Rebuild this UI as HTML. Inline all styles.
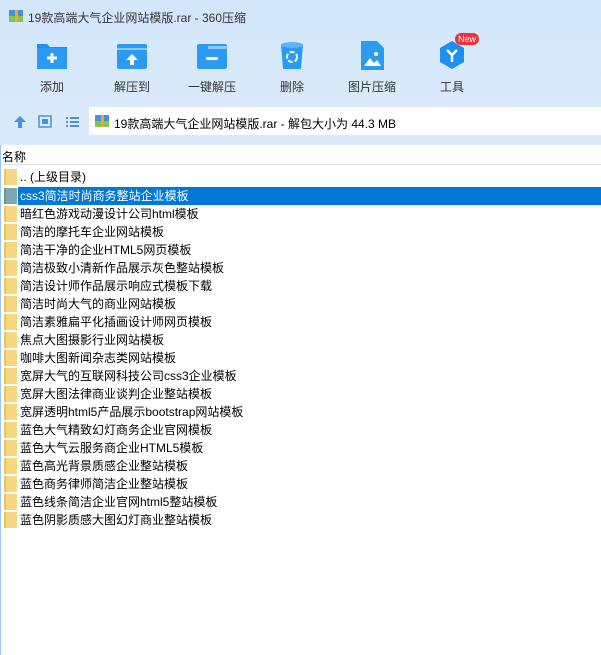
<!DOCTYPE html>
<html><head><meta charset="utf-8"><style>
*{margin:0;padding:0;box-sizing:border-box}
body{width:601px;height:655px;overflow:hidden;font-family:"Liberation Sans","Noto Sans CJK SC",sans-serif;background:#fff;position:relative;font-size:12px;color:#000}
.top{position:absolute;left:0;top:0;width:601px;height:145px;background:linear-gradient(#d3e6fa,#dcebfb)}
.title{position:absolute;left:28px;top:9px;font-size:12px;color:#333}
.tb{position:absolute;top:40px;width:60px;text-align:center;font-size:12px;color:#333}
.tb .ic{width:32px;height:30px;margin:0 auto 8px;position:relative}
.addr{position:absolute;left:89px;top:107px;width:512px;height:28px;background:#fff;font-size:12px;padding:8px 0 0 25px}
.hdr{position:absolute;left:0;top:145px;width:601px;height:20px;background:#fff;border-bottom:1px solid #e3e3e3;padding:3px 0 0 2px;font-size:12px}
.row{position:absolute;left:0;height:18px;width:601px;font-size:12px;line-height:18px}
.row .f{position:absolute;left:4px;top:1px;width:13px;height:16px;background:#f7d882;border-left:2px solid #e9c460}
.row span{position:absolute;left:18px;padding:0 2px}
.sel span{background:#0078d7;color:#fff;right:0}
.sel .f{background:#7fa7b2;border-left-color:#6d95a0}
.lb{position:absolute;left:0;top:145px;width:1px;height:510px;background:#9cc5ef}
</style></head><body>
<div class="top"></div>
<svg style="position:absolute;left:8px;top:8px" width="16" height="16"><rect x="1" y="2" width="14" height="12" fill="#4a90d9"/><rect x="1" y="8" width="14" height="6" fill="#8bc34a"/><rect x="7" y="2" width="3" height="12" fill="#e8a93a"/></svg>
<div class="title">19款高端大气企业网站模版.rar - 360压缩</div>

<div class="tb" style="left:22px"><div class="ic"><svg width="32" height="30"><path d="M1 4h10l3 3h17v22H1z" fill="#1e8ff0"/><rect x="1" y="8" width="30" height="21" rx="2" fill="#2b9af3"/><path d="M16 13v10M11 18h10" stroke="#fff" stroke-width="3"/></svg></div>添加</div>
<div class="tb" style="left:102px"><div class="ic"><svg width="32" height="30"><rect x="1" y="4" width="30" height="25" rx="2" fill="#2b9af3"/><rect x="1" y="8" width="30" height="2" fill="#8cc8fa"/><path d="M16 14l-6 6h4v5h4v-5h4z" fill="#fff"/></svg></div>解压到</div>
<div class="tb" style="left:182px"><div class="ic"><svg width="32" height="30"><rect x="1" y="4" width="30" height="25" rx="2" fill="#2b9af3"/><rect x="12" y="6" width="19" height="3" fill="#8cc8fa"/><rect x="10" y="17" width="12" height="3" fill="#fff"/></svg></div>一键解压</div>
<div class="tb" style="left:262px"><div class="ic"><svg width="32" height="30"><path d="M5 5h22l-2 24H7z" fill="#2b9af3"/><ellipse cx="16" cy="5" rx="11" ry="3" fill="#5fb3f7"/><circle cx="16" cy="17" r="5" fill="none" stroke="#fff" stroke-width="2" stroke-dasharray="5 2"/></svg></div>删除</div>
<div class="tb" style="left:342px"><div class="ic"><svg width="32" height="30"><path d="M5 1h16l7 7v22H5z" fill="#2b9af3"/><path d="M8 26l6-8 4 5 3-3 4 6z" fill="#fff"/><circle cx="20" cy="14" r="2" fill="#fff"/></svg></div>图片压缩</div>
<div class="tb" style="left:422px"><div class="ic"><svg width="32" height="30"><path d="M16 1l12 7v14l-12 7-12-7V8z" fill="#1e8ff0"/><path d="M11 10l5 5 5-5M16 15v7" stroke="#fff" stroke-width="2.5" fill="none"/></svg><div style="position:absolute;left:19px;top:-7px;background:#e8323c;color:#fff;font-size:9px;border-radius:7px;padding:0 3px;line-height:12px">New</div></div>工具</div>

<svg style="position:absolute;left:12px;top:114px" width="68" height="16"><path d="M8 2l-6 6h4v6h4V8h4z" fill="#4a90d9"/><rect x="27" y="2" width="12" height="11" fill="none" stroke="#4a90d9" stroke-width="1.5"/><rect x="30" y="5" width="6" height="5" fill="#4a90d9"/><g fill="#4a90d9"><rect x="54" y="3" width="2" height="2"/><rect x="58" y="3" width="9" height="2"/><rect x="54" y="7" width="2" height="2"/><rect x="58" y="7" width="9" height="2"/><rect x="54" y="11" width="2" height="2"/><rect x="58" y="11" width="9" height="2"/></g></svg>
<div class="addr"><svg style="position:absolute;left:5px;top:6px" width="16" height="16"><rect x="1" y="2" width="14" height="12" fill="#4a90d9"/><rect x="1" y="8" width="14" height="6" fill="#8bc34a"/><rect x="7" y="2" width="3" height="12" fill="#e8a93a"/></svg>19款高端大气企业网站模版.rar - 解包大小为 44.3 MB</div>
<div class="hdr">名称</div>
<div class="lb"></div>

<div class="row" style="top:168px"><i class="f"></i><span>.. (上级目录)</span></div>
<div class="row sel" style="top:187px"><i class="f"></i><span>css3简洁时尚商务整站企业模板</span></div>
<div class="row" style="top:205px"><i class="f"></i><span>暗红色游戏动漫设计公司html模板</span></div>
<div class="row" style="top:223px"><i class="f"></i><span>简洁的摩托车企业网站模板</span></div>
<div class="row" style="top:241px"><i class="f"></i><span>简洁干净的企业HTML5网页模板</span></div>
<div class="row" style="top:259px"><i class="f"></i><span>简洁极致小清新作品展示灰色整站模板</span></div>
<div class="row" style="top:277px"><i class="f"></i><span>简洁设计师作品展示响应式模板下载</span></div>
<div class="row" style="top:295px"><i class="f"></i><span>简洁时尚大气的商业网站模板</span></div>
<div class="row" style="top:313px"><i class="f"></i><span>简洁素雅扁平化插画设计师网页模板</span></div>
<div class="row" style="top:331px"><i class="f"></i><span>焦点大图摄影行业网站模板</span></div>
<div class="row" style="top:349px"><i class="f"></i><span>咖啡大图新闻杂志类网站模板</span></div>
<div class="row" style="top:367px"><i class="f"></i><span>宽屏大气的互联网科技公司css3企业模板</span></div>
<div class="row" style="top:385px"><i class="f"></i><span>宽屏大图法律商业谈判企业整站模板</span></div>
<div class="row" style="top:403px"><i class="f"></i><span>宽屏透明html5产品展示bootstrap网站模板</span></div>
<div class="row" style="top:421px"><i class="f"></i><span>蓝色大气精致幻灯商务企业官网模板</span></div>
<div class="row" style="top:439px"><i class="f"></i><span>蓝色大气云服务商企业HTML5模板</span></div>
<div class="row" style="top:457px"><i class="f"></i><span>蓝色高光背景质感企业整站模板</span></div>
<div class="row" style="top:475px"><i class="f"></i><span>蓝色商务律师简洁企业整站模板</span></div>
<div class="row" style="top:493px"><i class="f"></i><span>蓝色线条简洁企业官网html5整站模板</span></div>
<div class="row" style="top:511px"><i class="f"></i><span>蓝色阴影质感大图幻灯商业整站模板</span></div>
</body></html>
